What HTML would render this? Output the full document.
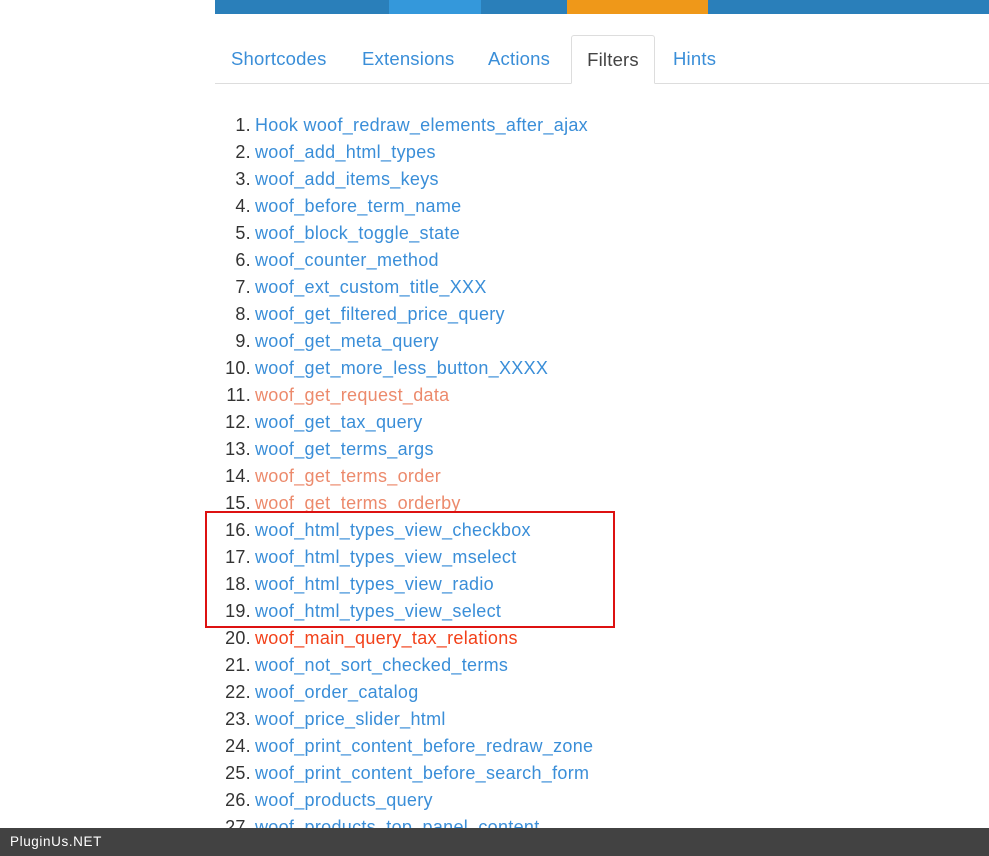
<!DOCTYPE html>
<html><head><meta charset="utf-8"><style>
*{margin:0;padding:0;box-sizing:border-box}
body{width:989px;height:856px;overflow:hidden;background:#fff;font-family:"Liberation Sans",sans-serif;position:relative}
.bar{position:absolute;top:0;height:14px}
.tabs{position:absolute;left:215px;top:35px;width:774px;height:49px;border-bottom:1px solid #ddd}
.tab{position:absolute;top:0;height:49px;line-height:48px;font-size:18.5px;color:#3a8ed8;letter-spacing:0.2px}
.tab.act{border:1px solid #ddd;border-bottom:1px solid #fff;background:#fff;color:#444;border-radius:3px 3px 0 0;height:49px}
ol{position:absolute;left:215px;top:112px;list-style:none;font-size:18px;letter-spacing:0.3px}
li{height:27px;line-height:27px;white-space:nowrap;position:relative;padding-left:40px}
li span.n{position:absolute;right:calc(100% - 36px);color:#333;white-space:nowrap}
li a{color:#3a8ed8;text-decoration:none}
li a.s{color:#ec8a6c}
li a.r{color:#f2411a}
.box{position:absolute;left:205px;top:511px;width:410px;height:117px;border:2px solid #d11}
.foot{position:absolute;left:0;top:828px;width:989px;height:28px;background:#424242;color:#fff;font-size:13.5px;line-height:28px;padding-left:10px;letter-spacing:0.6px}
</style></head><body>
<div class="bar" style="left:215px;width:174px;background:#2a7fba"></div>
<div class="bar" style="left:389px;width:92px;background:#3498db"></div>
<div class="bar" style="left:481px;width:86px;background:#2a7fba"></div>
<div class="bar" style="left:567px;width:141px;background:#ef9819"></div>
<div class="bar" style="left:708px;width:281px;background:#2a7fba"></div>
<div class="tabs">
<div class="tab" style="left:16px">Shortcodes</div>
<div class="tab" style="left:147px">Extensions</div>
<div class="tab" style="left:273px">Actions</div>
<div class="tab act" style="left:356px;width:84px;text-align:center">Filters</div>
<div class="tab" style="left:458px">Hints</div>
</div>
<ol>
<li><span class="n">1.</span><a>Hook woof_redraw_elements_after_ajax</a></li>
<li><span class="n">2.</span><a>woof_add_html_types</a></li>
<li><span class="n">3.</span><a>woof_add_items_keys</a></li>
<li><span class="n">4.</span><a>woof_before_term_name</a></li>
<li><span class="n">5.</span><a>woof_block_toggle_state</a></li>
<li><span class="n">6.</span><a>woof_counter_method</a></li>
<li><span class="n">7.</span><a>woof_ext_custom_title_XXX</a></li>
<li><span class="n">8.</span><a>woof_get_filtered_price_query</a></li>
<li><span class="n">9.</span><a>woof_get_meta_query</a></li>
<li><span class="n">10.</span><a>woof_get_more_less_button_XXXX</a></li>
<li><span class="n">11.</span><a class="s">woof_get_request_data</a></li>
<li><span class="n">12.</span><a>woof_get_tax_query</a></li>
<li><span class="n">13.</span><a>woof_get_terms_args</a></li>
<li><span class="n">14.</span><a class="s">woof_get_terms_order</a></li>
<li><span class="n">15.</span><a class="s">woof_get_terms_orderby</a></li>
<li><span class="n">16.</span><a>woof_html_types_view_checkbox</a></li>
<li><span class="n">17.</span><a>woof_html_types_view_mselect</a></li>
<li><span class="n">18.</span><a>woof_html_types_view_radio</a></li>
<li><span class="n">19.</span><a>woof_html_types_view_select</a></li>
<li><span class="n">20.</span><a class="r">woof_main_query_tax_relations</a></li>
<li><span class="n">21.</span><a>woof_not_sort_checked_terms</a></li>
<li><span class="n">22.</span><a>woof_order_catalog</a></li>
<li><span class="n">23.</span><a>woof_price_slider_html</a></li>
<li><span class="n">24.</span><a>woof_print_content_before_redraw_zone</a></li>
<li><span class="n">25.</span><a>woof_print_content_before_search_form</a></li>
<li><span class="n">26.</span><a>woof_products_query</a></li>
<li><span class="n">27.</span><a>woof_products_top_panel_content</a></li>
</ol>
<div class="box"></div>
<div class="foot">PluginUs.NET</div>
</body></html>
